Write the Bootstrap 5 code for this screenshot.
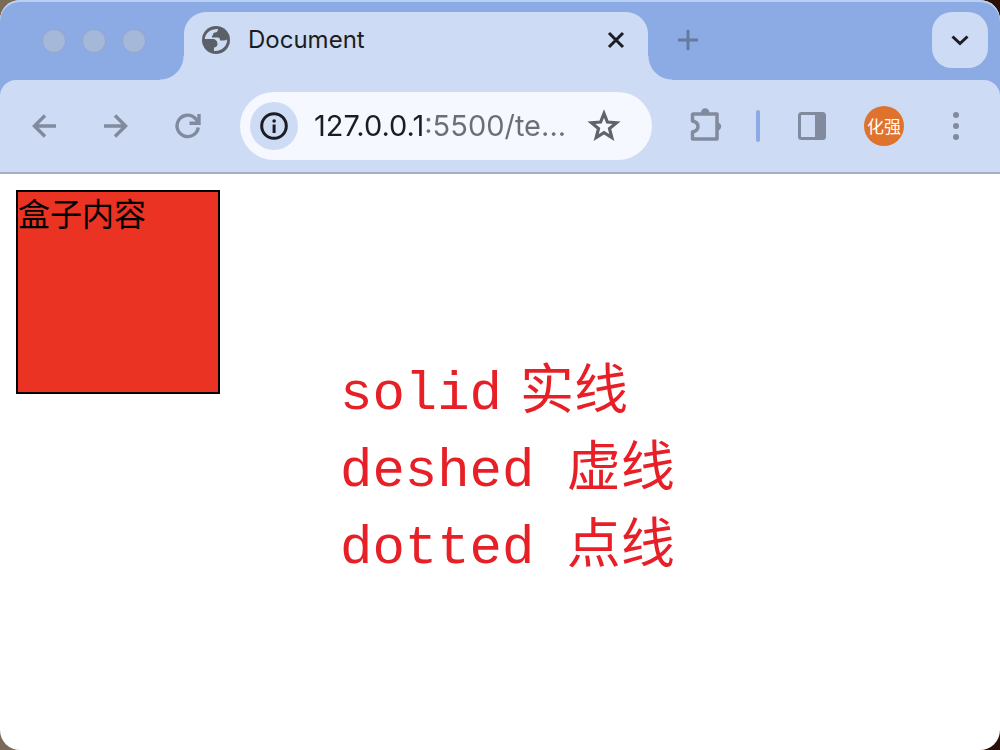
<!DOCTYPE html>
<html lang="zh-CN">
<head>
<meta charset="utf-8">
<meta name="viewport" content="width=device-width, initial-scale=1">
<title>Document</title>
<link href="https://cdn.jsdelivr.net/npm/bootstrap@5.3.0/dist/css/bootstrap.min.css" rel="stylesheet">
<style>
  :root { --frame: #8cabe4; --chrome: #cedbf5; --ink: #1b1d22; --muted: #828b9d; }
  body { font-family: Inter, "Noto Sans CJK SC", sans-serif; color: var(--ink); background: linear-gradient(90deg, #7b6a58 50%, #2a1008 50%); }
  svg { display: block; }
  .window { background: #fff; border-radius: 20px; overflow: hidden; }
  .tab-strip { background: var(--frame); height: 96px; margin-bottom: -16px; padding: 12px 12px 0 42px; box-shadow: inset 0 2px #b9d0f5; border-radius: 20px 20px 0 0; }
  .light { width: 24px; height: 24px; border-radius: 50%; background: #a6b8d9; border: 1px solid #93a6cd; }
  .lights { height: 58px; gap: 16px; margin-right: 38px; }
  .page-tab { position: relative; width: 464px; height: 68px; background: var(--chrome); border-radius: 22px 22px 0 0; padding: 0 20px 12px 18px; }
  .page-tab::before, .page-tab::after { content: ""; position: absolute; bottom: 0; width: 24px; height: 24px; }
  .page-tab::before { right: 100%; background: radial-gradient(circle at 0 0, transparent 23px, var(--chrome) 24px); }
  .page-tab::after { left: 100%; background: radial-gradient(circle at 100% 0, transparent 23px, var(--chrome) 24px); }
  .tab-title { font-size: 24px; line-height: 32px; margin-left: 18px; }
  .plain { border: 0; padding: 0; background: none; color: var(--muted); display: flex; align-items: center; justify-content: center; flex: none; }
  .new-tab { width: 56px; height: 56px; margin-left: 12px; color: #647a9f; }
  .tab-search { width: 56px; height: 56px; border-radius: 20px; background: var(--chrome); color: var(--ink); }
  .close-tab { width: 24px; height: 24px; color: var(--ink); }
  .toolbar { position: relative; height: 94px; background: var(--chrome); border-radius: 16px 16px 0 0; border-bottom: 2px solid #a5aec5; }
  .tool { width: 72px; height: 68px; }
  .omnibox { height: 68px; border-radius: 34px; background: #f5f8fe; margin: 0 16px; padding: 0 30px 0 10px; min-width: 0; }
  .site-info { width: 48px; height: 48px; border-radius: 50%; background: var(--chrome); color: var(--ink); }
  .address { border: 0; outline: 0; padding: 0; margin-left: 16px; min-width: 0; flex: 1; font-size: 29px; line-height: 40px;
    background: linear-gradient(90deg, #1b1d22 111px, #6b6e74 111px); -webkit-background-clip: text; background-clip: text; color: transparent; }
  .star { color: #606368; }
  .divider { flex: none; width: 4px; height: 32px; margin: 0 16px; border-radius: 2px; background: var(--frame); }
  .avatar { width: 40px; height: 40px; border-radius: 50%; background: #df732d; color: #fff; font: 17px/40px "Noto Sans CJK SC", sans-serif; }
  .demo-box { width: 204px; height: 204px; background: #eb3323; border: 2px solid #000; color: #000; font: 32px/40px "Noto Sans CJK SC", sans-serif; flex: none; }
  .notes { margin: 166px 0 0 120px; color: #e71f27; font: 54px/77px "Liberation Mono", "Noto Sans CJK SC", monospace; }
  .notes li { white-space: pre; }
  .narrow { display: flex; gap: 18px; }
</style>
</head>
<body>
<div class="window min-vh-100">
  <header>
    <div class="tab-strip d-flex align-items-start">
      <div class="lights d-flex align-items-center"><span class="light"></span><span class="light"></span><span class="light"></span></div>
      <div class="page-tab d-flex align-items-center">
        <svg width="28" height="28" viewBox="0 0 28 28"><circle cx="14" cy="14" r="14" fill="#5b6066"/><path fill="#cedbf5" d="M2.800 13C3.500 7 8 3 16 3c0 2-1 3.500-3 3.500-1.500 0-2 1-2 3h-1v2h6c1.500 0 2 1 2 3h4c1 0 2-.5 3.200-1C25 20 20 25.500 12 25v-3.500c2-.2 3.500-1 3.500-3.500 0-3-2-5-5-5z"/></svg>
        <span class="tab-title me-auto">Document</span>
        <button class="plain close-tab" aria-label="关闭"><svg width="20" height="20" viewBox="0 0 20 20" stroke="currentColor" stroke-width="3"><path d="M3 3l14 14M17 3L3 17"/></svg></button>
      </div>
      <button class="plain new-tab" aria-label="新标签页"><svg width="20" height="20" viewBox="0 0 20 20" stroke="currentColor" stroke-width="3"><path d="M10 0v20M0 10h20"/></svg></button>
      <button class="plain tab-search ms-auto" aria-label="搜索标签页"><svg width="20" height="20" viewBox="0 0 20 20" fill="none" stroke="currentColor" stroke-width="3"><path d="M2.500 6.500l7.500 7 7.500-7"/></svg></button>
    </div>
    <nav class="toolbar d-flex align-items-center px-2">
      <button class="plain tool" aria-label="后退"><svg width="24" height="24" viewBox="0 0 24 24" fill="none" stroke="currentColor" stroke-width="3.5"><path d="M24 12H2.500M13 1.500L2.500 12 13 22.500"/></svg></button>
      <button class="plain tool" aria-label="前进"><svg width="24" height="24" viewBox="0 0 24 24" fill="none" stroke="currentColor" stroke-width="3.5"><path d="M0 12h21.500M11 1.500L21.500 12 11 22.500"/></svg></button>
      <button class="plain tool" aria-label="重新加载"><svg width="26" height="26" viewBox="0 0 26 26" fill="none" stroke="currentColor" stroke-width="3.4"><path d="M23.300 14.500A10.700 10.700 0 1 1 20.500 5.500l3 4M24 1v9.300H14.500"/></svg></button>
      <div class="omnibox d-flex align-items-center flex-grow-1">
        <button class="plain site-info" aria-label="网站信息"><svg width="28" height="28" viewBox="0 0 28 28"><circle cx="14" cy="14" r="12.300" fill="none" stroke="currentColor" stroke-width="3"/><path fill="currentColor" d="M12.600 12.500h3V21h-3z"/><circle cx="14.100" cy="9" r="1.800" fill="currentColor"/></svg></button>
        <input class="address" type="text" aria-label="地址" value="127.0.0.1:5500/te...">
        <button class="plain star" aria-label="收藏"><svg width="36" height="36" viewBox="0 0 36 36" fill="none" stroke="currentColor" stroke-width="3.2"><path d="M18 5.500l3.400 8.500 9.100.7-7 5.900 2.300 8.900L18 24.700l-7.800 4.800 2.300-8.900-7-5.900 9.100-.7z"/></svg></button>
      </div>
      <button class="plain tool" aria-label="扩展程序"><svg width="36" height="36" viewBox="0 0 36 36"><path fill="none" stroke="currentColor" stroke-width="3.500" stroke-linejoin="round" d="M7 6H31V31H6.500V24C11 23 12 20.500 12 18.500S11 14 6.500 13V6.500z"/><path fill="currentColor" d="M15 4.500a4.200 4.200 0 0 1 8.400 0v2H15zM31 14.300a4.200 4.200 0 0 1 0 8.400z"/></svg></button>
      <span class="divider"></span>
      <button class="plain tool" aria-label="侧边栏"><svg width="28" height="28" viewBox="0 0 28 28"><rect x="1.500" y="1.500" width="25" height="25" rx="2" fill="none" stroke="currentColor" stroke-width="3"/><path fill="currentColor" d="M17 1h10v26H17z"/></svg></button>
      <button class="plain tool" aria-label="个人资料"><span class="avatar">化强</span></button>
      <button class="plain tool" aria-label="菜单"><svg width="8" height="28" viewBox="0 0 8 28" fill="currentColor"><circle cx="4" cy="3" r="3"/><circle cx="4" cy="14" r="3"/><circle cx="4" cy="25" r="3"/></svg></button>
    </nav>
  </header>
  <main class="d-flex align-items-start p-3">
    <div class="demo-box">盒子内容</div>
    <ul class="notes list-unstyled">
      <li class="narrow"><span>solid</span><span>实线</span></li>
      <li>deshed 虚线</li>
      <li>dotted 点线</li>
    </ul>
  </main>
</div>
<script src="https://cdn.jsdelivr.net/npm/bootstrap@5.3.0/dist/js/bootstrap.bundle.min.js"></script>
</body>
</html>
